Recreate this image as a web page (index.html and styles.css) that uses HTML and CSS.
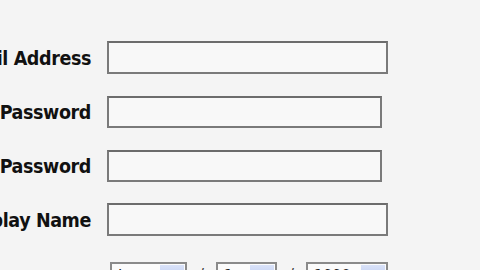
FILE: index.html
```html
<!DOCTYPE html>
<html lang="en">
  <head>
    <meta charset="UTF-8" />
    <meta name="viewport" content="width=device-width, initial-scale=1.0" />
    <title>Sign Up</title>
    <link rel="stylesheet" href="styles.css">
  </head>
  <body>
    <div class="container">
      <div class="form-row">
        <label for="email">Email Address</label>
        <input type="text" id="email" class="field wide" />
      </div>
      <div class="form-row">
        <label for="password">Password</label>
        <input type="password" id="password" class="field" />
      </div>
      <div class="form-row">
        <label for="confirm">Confirm Password</label>
        <input type="password" id="confirm" class="field" />
      </div>
      <div class="form-row">
        <label for="display">Display Name</label>
        <input type="text" id="display" class="field wide" />
      </div>
      <div class="form-row birthday">
        <label>Birthday</label>
        <div class="date-group">
          <div class="dropdown month"><span class="value">Jan</span><span class="arrow"></span></div>
          <span class="slash">/</span>
          <div class="dropdown day"><span class="value">1</span><span class="arrow"></span></div>
          <span class="slash">/</span>
          <div class="dropdown year"><span class="value">1990</span><span class="arrow"></span></div>
        </div>
      </div>
    </div>
  </body>
</html>
```

FILE: styles.css
```css
body {
  margin: 0;
  padding: 0;
  background-color: #f4f4f4;
  font-family: "DejaVu Sans Condensed", "DejaVu Sans", sans-serif;
  overflow: hidden;
}

.container {
  padding-top: 41px;
  display: flex;
  flex-direction: column;
  gap: 21px;
}

.form-row {
  display: grid;
  grid-template-columns: 91px auto;
  column-gap: 16px;
  align-items: center;
  height: 33px;
}

.form-row label {
  display: flex;
  justify-content: flex-end;
  white-space: nowrap;
  font-weight: bold;
  font-size: 19.5px;
  letter-spacing: -0.4px;
  color: #111;
  padding-top: 1px;
}

.field {
  box-sizing: border-box;
  width: 275px;
  height: 32px;
  margin: 0;
  border: 2px solid #7a7a7a;
  border-top-color: #6c6c6c;
  background-color: #f8f8f8;
  font-size: 16px;
  padding: 4px;
}

.field.wide {
  width: 281px;
  height: 33px;
}

.birthday {
  margin-top: 5px;
  align-items: start;
}

.birthday label {
  padding-top: 6px;
}

.date-group {
  display: flex;
  align-items: flex-start;
  padding-left: 3px;
}

.dropdown {
  box-sizing: border-box;
  height: 24px;
  border: 2px solid #8a8a8a;
  background-color: #fbfbfb;
  display: flex;
  justify-content: space-between;
  font-size: 16px;
  color: #222;
}

.dropdown .value {
  padding: 2px 0 0 6px;
}

.dropdown .arrow {
  width: 24px;
  margin: 1px;
  background: linear-gradient(#d9e2f8, #b7c6ee);
}

.month {
  width: 77px;
}

.day {
  width: 61px;
}

.year {
  width: 82px;
}

.slash {
  width: 29px;
  text-align: center;
  font-size: 16px;
  color: #333;
  padding-top: 3px;
}
```
